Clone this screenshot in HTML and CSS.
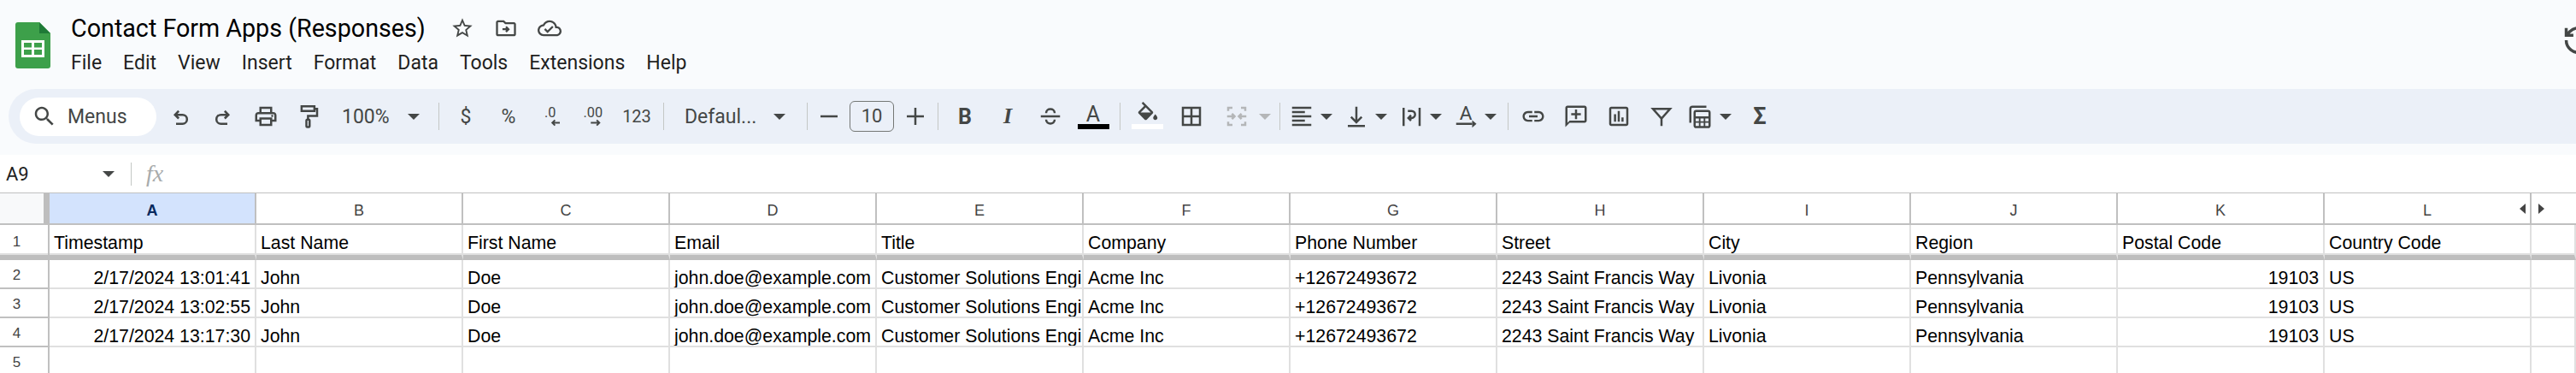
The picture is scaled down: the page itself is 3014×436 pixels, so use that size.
FILE: index.html
```html
<!DOCTYPE html>
<html lang="en">
<head>
  <meta charset="UTF-8">
  <title>Contact Form Apps (Responses)</title>
  <link rel="stylesheet" href="styles.css">
</head>
<body>
  <header class="top">
    <div class="titlebar">
      <svg class="logo" viewBox="0 0 41 54">
        <path d="M3 0h25l13 13v38a3 3 0 0 1-3 3H3a3 3 0 0 1-3-3V3a3 3 0 0 1 3-3z" fill="#3da04a"/>
        <path d="M28 0l13 13H28z" fill="#1f7a37"/>
        <path d="M7 21h27v20H7zm3 3v5.500h9V24zm12 0v5.500h9V24zM10 32v6h9v-6zm12 0v6h9v-6z" fill="#fff" fill-rule="evenodd"/>
      </svg>
      <div class="doc">
        <div class="doc-title">
          <h1>Contact Form Apps (Responses)</h1>
          <div class="doc-icons">
            <svg class="ico-doc" viewBox="0 0 24 24"><path d="M22 9.240l-7.190-.62L12 2 9.190 8.630 2 9.240l5.460 4.730L5.820 21 12 17.270 18.180 21l-1.630-7.030L22 9.240zM12 15.400l-3.760 2.270 1-4.280-3.320-2.880 4.380-.38L12 6.100l1.710 4.040 4.380.38-3.320 2.880 1 4.280L12 15.400z"/></svg>
            <svg class="ico-doc" viewBox="0 0 24 24"><path d="M20 6h-8l-2-2H4c-1.100 0-2 .9-2 2v12c0 1.100.9 2 2 2h16c1.100 0 2-.9 2-2V8c0-1.100-.9-2-2-2zm0 12H4V6h5.170l2 2H20v10z"/><path class="line" d="M8.500 13h6M12 10.500l2.500 2.500-2.500 2.500"/></svg>
            <svg class="ico-doc" viewBox="0 0 24 24"><path d="M19.350 10.040C18.670 6.590 15.640 4 12 4 9.110 4 6.600 5.640 5.350 8.040 2.340 8.360 0 10.910 0 14c0 3.310 2.690 6 6 6h13c2.760 0 5-2.240 5-5 0-2.640-2.050-4.780-4.650-4.960zM19 18H6c-2.210 0-4-1.790-4-4 0-2.050 1.530-3.760 3.560-3.970l1.070-.11.5-.95C8.080 7.140 9.940 6 12 6c2.620 0 4.880 1.860 5.390 4.430l.3 1.500 1.530.11c1.560.1 2.780 1.410 2.780 2.960 0 1.650-1.350 3-3 3zm-9-3.820l-2.090-2.090L6.500 13.500 10 17l6.010-6.010-1.410-1.410z"/></svg>
          </div>
        </div>
        <nav class="menu">
          <span>File</span><span>Edit</span><span>View</span><span>Insert</span><span>Format</span><span>Data</span><span>Tools</span><span>Extensions</span><span>Help</span>
        </nav>
      </div>
      <svg class="history" viewBox="0 0 24 24"><path d="M3.500 12a9 9 0 1 0 2.600-6.300L3.500 8.300M3.500 3v5.300h5.300M12 7v5.500l4 2"/></svg>
    </div>

    <div class="toolbar">
      <div class="search">
        <svg class="ico" viewBox="0 0 24 24"><path d="M15.500 14h-.79l-.28-.27C15.410 12.590 16 11.110 16 9.500 16 5.910 13.090 3 9.500 3S3 5.910 3 9.500 5.910 16 9.500 16c1.610 0 3.090-.59 4.230-1.570l.27.28v.79l5 4.990L20.490 19l-4.990-5zm-6 0C7.010 14 5 11.990 5 9.500S7.010 5 9.500 5 14 7.010 14 9.500 11.990 14 9.500 14z"/></svg>
        <span>Menus</span>
      </div>

      <div class="btn"><svg class="ico" viewBox="0 0 24 24"><path class="line" d="M10.500 7L7 10.500l3.500 3.500M7 10.500h7a4.200 4.200 0 0 1 0 8.500H8"/></svg></div>
      <div class="btn"><svg class="ico" viewBox="0 0 24 24"><path class="line" d="M13.500 7l3.500 3.500-3.500 3.500M17 10.500h-7a4.200 4.200 0 0 0 0 8.500h6"/></svg></div>
      <div class="btn"><svg class="ico" viewBox="0 0 24 24"><path d="M19 8h-1V3H6v5H5c-1.660 0-3 1.340-3 3v6h4v4h12v-4h4v-6c0-1.660-1.340-3-3-3zM8 5h8v3H8V5zm8 14H8v-4h8v4zm4-4h-2v-2H6v2H4v-4c0-.55.45-1 1-1h14c.55 0 1 .45 1 1v4z"/><circle cx="18" cy="11.500" r="1"/></svg></div>
      <div class="btn"><svg class="ico" viewBox="0 0 24 24"><path class="line" d="M5.500 2.500h12v4.500h-12zM17.500 5H20v6.500h-8.500V15"/><rect class="line" x="10" y="15" width="3" height="7" rx="1"/></svg></div>
      <div class="drop zoom-drop"><span>100%</span><i class="caret"></i></div>
      <i class="sep"></i>

      <div class="btn"><span class="glyph">$</span></div>
      <div class="btn"><span class="glyph">%</span></div>
      <div class="btn">
        <svg class="ico" viewBox="0 0 24 24"><text x="11" y="13" text-anchor="middle" class="svg-label">.0</text><path class="line thin" d="M20 18h-7M15.500 15.500L13 18l2.500 2.500"/></svg>
      </div>
      <div class="btn">
        <svg class="ico" viewBox="0 0 24 24"><text x="11" y="13" text-anchor="middle" class="svg-label">.00</text><path class="line thin" d="M9 18h8M14.500 15.500L17 18l-2.500 2.500"/></svg>
      </div>
      <div class="btn"><span class="glyph digits">123</span></div>
      <i class="sep"></i>

      <div class="drop font-drop"><span>Defaul...</span><i class="caret"></i></div>
      <i class="sep"></i>

      <div class="btn minus"><svg class="ico" viewBox="0 0 24 24"><path d="M4 11h16v2H4z"/></svg></div>
      <div class="size-box">10</div>
      <div class="btn plus"><svg class="ico" viewBox="0 0 24 24"><path d="M11 4h2v7h7v2h-7v7h-2v-7H4v-2h7z"/></svg></div>
      <i class="sep"></i>

      <div class="btn"><span class="glyph bold">B</span></div>
      <div class="btn"><span class="glyph italic">I</span></div>
      <div class="btn"><svg class="ico" viewBox="0 0 24 24"><path d="M3 11h18v2H3z"/><path class="line" d="M8 9c0-5 8-5 8 0M8 15c0 5 8 5 8 0"/></svg></div>
      <div class="btn swatch"><span class="glyph">A</span><i class="bar bar-black"></i></div>
      <i class="sep"></i>

      <div class="btn swatch fill-btn">
        <svg class="ico fill-ico" viewBox="0 0 24 24"><path fill-rule="evenodd" d="M16.560 8.940L7.620 0 6.210 1.410l2.380 2.380-5.150 5.150c-.59.59-.59 1.540 0 2.120l5.500 5.500c.29.29.68.44 1.060.44s.77-.15 1.060-.44l5.500-5.500c.59-.58.59-1.530 0-2.120zM5.210 10L10 5.210 14.790 10H5.210zM19 11.500s-2 2.170-2 3.500c0 1.100.9 2 2 2s2-.9 2-2c0-1.330-2-3.500-2-3.500z"/></svg>
        <i class="bar bar-white"></i>
      </div>
      <div class="btn"><svg class="ico" viewBox="0 0 24 24"><path d="M3 3v18h18V3H3zm8 16H5v-6h6v6zm0-8H5V5h6v6zm8 8h-6v-6h6v6zm0-8h-6V5h6v6z"/></svg></div>
      <div class="drop merge-drop">
        <svg class="ico off" viewBox="0 0 24 24"><path class="line" d="M8 4H4v3M16 4h4v3M8 20H4v-3M16 20h4v-3M3 12h7M7.500 9.500L10 12l-2.500 2.500M21 12h-7M16.500 9.500L14 12l2.500 2.500"/></svg>
        <i class="caret off-caret"></i>
      </div>
      <i class="sep"></i>

      <div class="drop tool-drop"><svg class="ico" viewBox="0 0 24 24"><path d="M15 15H3v2h12v-2zm0-8H3v2h12V7zM3 13h18v-2H3v2zm0 8h18v-2H3v2zM3 3v2h18V3H3z"/></svg><i class="caret"></i></div>
      <div class="drop tool-drop"><svg class="ico" viewBox="0 0 24 24"><path class="line" d="M12 3v14M7 12.500l5 5 5-5"/><path d="M4 20h16v2H4z"/></svg><i class="caret"></i></div>
      <div class="drop tool-drop"><svg class="ico" viewBox="0 0 24 24"><path d="M4 4h2v17H4zM19 4h2v17h-2z"/><path class="line" d="M9 7h3.500a3 3 0 0 1 0 6.500H10M12 11l-2.500 2.500L12 16"/></svg><i class="caret"></i></div>
      <div class="drop tool-drop"><svg class="ico" viewBox="0 0 24 24"><text x="12" y="15" text-anchor="middle" class="svg-label big">A</text><path d="M3 18h15v2H3z"/><path d="M18 15.500l4 3.500-4 3.500z"/></svg><i class="caret"></i></div>
      <i class="sep sep-tight"></i>

      <div class="btn"><svg class="ico" viewBox="0 0 24 24"><path d="M3.900 12c0-1.710 1.390-3.100 3.100-3.100h4V7H7c-2.760 0-5 2.240-5 5s2.240 5 5 5h4v-1.900H7c-1.710 0-3.100-1.390-3.100-3.100zM8 13h8v-2H8v2zm9-6h-4v1.900h4c1.710 0 3.100 1.390 3.100 3.100s-1.390 3.100-3.100 3.100h-4V17h4c2.760 0 5-2.240 5-5s-2.240-5-5-5z"/></svg></div>
      <div class="btn"><svg class="ico" viewBox="0 0 24 24"><path d="M20 2H4c-1.100 0-2 .9-2 2v18l4-4h14c1.100 0 2-.9 2-2V4c0-1.100-.9-2-2-2zm0 14H6l-2 2V4h16v12z"/><path d="M11 5.500h2V9h3.500v2H13v3.500h-2V11H7.500V9H11z"/></svg></div>
      <div class="btn"><svg class="ico" viewBox="0 0 24 24"><path d="M19 3H5c-1.100 0-2 .9-2 2v14c0 1.100.9 2 2 2h14c1.100 0 2-.9 2-2V5c0-1.100-.9-2-2-2zm0 16H5V5h14v14z"/><path d="M7.500 10h2v7h-2zM11 7h2v10h-2zM14.500 13h2v4h-2z"/></svg></div>
      <div class="btn"><svg class="ico" viewBox="0 0 24 24"><path class="line" d="M4 5h16l-8 9zM12 14v7"/></svg></div>
      <div class="drop calc-drop"><svg class="ico" viewBox="0 0 24 24"><path class="line" d="M18 3H5a2 2 0 0 0-2 2v13"/><rect class="line" x="7" y="7" width="14" height="15" rx="1.500"/><path d="M7 12h14v2H7zM7 16.500h14v1.500H7zM11 13h1.500v9H11zM15.500 13H17v9h-1.500z"/></svg><i class="caret"></i></div>
      <div class="btn"><span class="glyph bold sigma">Σ</span></div>
    </div>
  </header>

  <div class="formula-bar">
    <div class="name-box"><span>A9</span><i class="caret"></i></div>
    <i class="sep formula-sep"></i>
    <span class="fx">fx</span>
  </div>

  <table class="sheet">
    <colgroup>
      <col class="col-rowhead">
      <col class="col-data"><col class="col-data"><col class="col-data"><col class="col-data">
      <col class="col-data"><col class="col-data"><col class="col-data"><col class="col-data">
      <col class="col-data"><col class="col-data"><col class="col-data"><col class="col-data">
      <col>
    </colgroup>
    <thead>
      <tr>
        <th class="corner"></th>
        <th class="picked">A</th><th>B</th><th>C</th><th>D</th><th>E</th><th>F</th>
        <th>G</th><th>H</th><th>I</th><th>J</th><th>K</th>
        <th class="last-col">L<i class="tri tri-left"></i></th>
        <th class="tail"><i class="tri tri-right"></i></th>
      </tr>
    </thead>
    <tbody>
      <tr class="frozen">
        <th>1</th>
        <td>Timestamp</td><td>Last Name</td><td>First Name</td><td>Email</td><td>Title</td><td>Company</td>
        <td>Phone Number</td><td>Street</td><td>City</td><td>Region</td><td>Postal Code</td><td>Country Code</td><td></td>
      </tr>
      <tr>
        <th>2</th>
        <td class="num">2/17/2024 13:01:41</td><td>John</td><td>Doe</td><td>john.doe@example.com</td><td>Customer Solutions Engineer</td><td>Acme Inc</td>
        <td>+12672493672</td><td>2243 Saint Francis Way</td><td>Livonia</td><td>Pennsylvania</td><td class="num">19103</td><td>US</td><td></td>
      </tr>
      <tr>
        <th>3</th>
        <td class="num">2/17/2024 13:02:55</td><td>John</td><td>Doe</td><td>john.doe@example.com</td><td>Customer Solutions Engineer</td><td>Acme Inc</td>
        <td>+12672493672</td><td>2243 Saint Francis Way</td><td>Livonia</td><td>Pennsylvania</td><td class="num">19103</td><td>US</td><td></td>
      </tr>
      <tr>
        <th>4</th>
        <td class="num">2/17/2024 13:17:30</td><td>John</td><td>Doe</td><td>john.doe@example.com</td><td>Customer Solutions Engineer</td><td>Acme Inc</td>
        <td>+12672493672</td><td>2243 Saint Francis Way</td><td>Livonia</td><td>Pennsylvania</td><td class="num">19103</td><td>US</td><td></td>
      </tr>
      <tr>
        <th>5</th>
        <td></td><td></td><td></td><td></td><td></td><td></td><td></td><td></td><td></td><td></td><td></td><td></td><td></td>
      </tr>
    </tbody>
  </table>
</body>
</html>
```

FILE: styles.css
```css
html, body {
  margin: 0;
  height: 436px;
  overflow: hidden;
  background: #fff;
  font-family: Roboto, "Liberation Sans", sans-serif;
  color: #444746;
}

svg {
  display: block;
  flex-shrink: 0;
  fill: #444746;
}

.line {
  fill: none;
  stroke: #444746;
  stroke-width: 2;
}

.thin {
  stroke-width: 1.600;
}

/* top area */
.top {
  height: 181px;
  background: #f9fbfd;
  overflow: hidden;
}

.titlebar {
  display: flex;
  height: 104px;
  box-sizing: border-box;
  padding: 14px 0 0 18px;
}

.logo {
  width: 41px;
  height: 54px;
  margin-top: 12px;
}

.doc {
  margin-left: 24px;
}

.doc-title {
  display: flex;
  align-items: center;
  height: 38px;
}

.doc-title h1 {
  margin: 0;
  width: 414px;
  font-size: 28.700px;
  font-weight: 400;
  color: #000;
  white-space: nowrap;
}

.doc-icons {
  display: flex;
  gap: 23px;
  margin-left: 30px;
}

.ico-doc {
  width: 28px;
  height: 28px;
}

.menu {
  display: flex;
  margin-top: 8px;
  font-size: 23px;
  line-height: 28px;
  color: #1f1f1f;
}

.menu span {
  margin-right: 25px;
}

.history {
  width: 38px;
  height: 38px;
  margin: 14px -21px 0 auto;
  fill: none;
  stroke: #444746;
  stroke-width: 2.200;
}

/* toolbar */
.toolbar {
  display: flex;
  align-items: center;
  height: 64px;
  margin-left: 10px;
  padding-left: 13px;
  background: #ebf0f8;
  border-radius: 32px 0 0 32px;
  font-size: 23px;
}

.search {
  display: flex;
  align-items: center;
  gap: 12px;
  width: 160px;
  height: 45px;
  box-sizing: border-box;
  padding-left: 14px;
  margin-right: 3px;
  background: #fff;
  border-radius: 23px;
}

.ico {
  width: 30px;
  height: 30px;
}

.btn {
  position: relative;
  display: flex;
  align-items: center;
  justify-content: center;
  width: 50px;
  height: 50px;
}

.minus {
  width: 38px;
}

.plus {
  width: 40px;
  margin-left: 5px;
}

.fill-btn {
  width: 52px;
}

.glyph {
  font-size: 23px;
  line-height: 1;
}

.glyph.digits {
  font-size: 20px;
}

.bold {
  font-weight: 700;
  font-size: 25px;
}

.sigma {
  font-size: 27px;
}

.italic {
  font-style: italic;
  font-weight: 700;
  font-size: 26px;
  font-family: "Liberation Serif", serif;
}

.svg-label {
  font-size: 13px;
  font-family: Roboto, sans-serif;
  fill: #444746;
}

.svg-label.big {
  font-size: 18px;
}

.drop {
  display: flex;
  align-items: center;
  height: 50px;
  box-sizing: border-box;
}

.zoom-drop {
  width: 121px;
  padding-left: 14px;
  gap: 21px;
}

.font-drop {
  width: 155px;
  padding-left: 18px;
  gap: 20px;
}

.merge-drop {
  width: 72px;
  padding-left: 13px;
  gap: 11px;
}

.tool-drop {
  width: 64px;
  padding-left: 4px;
  gap: 7px;
}

.calc-drop {
  width: 65px;
  padding-left: 5px;
  gap: 8px;
}

.caret {
  width: 0;
  height: 0;
  border-left: 7px solid transparent;
  border-right: 7px solid transparent;
  border-top: 7px solid #444746;
}

.off-caret {
  border-top-color: #b4b6b8;
}

.off path {
  stroke: #b4b6b8;
}

.sep {
  width: 1px;
  height: 32px;
  margin: 0 6px;
  background: #c4c7c5;
}

.sep-tight {
  margin: 0 4px;
}

.size-box {
  width: 52px;
  height: 36px;
  margin-left: 5px;
  box-sizing: border-box;
  border: 1.500px solid #747775;
  border-radius: 6px;
  text-align: center;
  font-size: 22px;
  line-height: 33px;
}

.swatch .glyph {
  margin-bottom: 6px;
  font-size: 25px;
}

.fill-ico {
  margin-bottom: 4px;
}

.bar {
  position: absolute;
  left: 7px;
  bottom: 10px;
  width: 37px;
  height: 6px;
}

.bar-black {
  background: #000;
}

.bar-white {
  background: #fff;
}

/* formula bar */
.formula-bar {
  display: flex;
  align-items: center;
  height: 44px;
  background: #fff;
}

.name-box {
  display: flex;
  align-items: center;
  justify-content: space-between;
  width: 134px;
  box-sizing: border-box;
  padding: 0 0 0 7px;
  font-size: 22px;
  color: #1f1f1f;
}

.formula-sep {
  height: 27px;
  margin: 0 0 0 19px;
}

.fx {
  margin-left: 17px;
  font: italic 28px "Liberation Serif", serif;
  color: #a8abac;
}

/* grid */
.sheet {
  table-layout: fixed;
  width: 3014px;
  border-collapse: separate;
  border-spacing: 0;
  border-top: 1px solid #c0c0c0;
  font-family: "Liberation Sans", Arial, sans-serif;
}

.col-rowhead {
  width: 58px;
}

.col-data {
  width: 242px;
}

.sheet th,
.sheet td {
  box-sizing: border-box;
  padding: 0;
  overflow: hidden;
  white-space: nowrap;
}

.sheet thead th {
  position: relative;
  height: 37px;
  padding-top: 6px;
  border-right: 2px solid #c0c0c0;
  border-bottom: 2px solid #c0c0c0;
  font-size: 18px;
  font-weight: 400;
  color: #444;
  text-align: center;
}

.sheet thead .corner {
  background: #f8f9fa;
  border-right: 7px solid #bebebe;
}

.sheet thead .picked {
  background: #d3e3fd;
  color: #0b2a5e;
  font-weight: 700;
}

.sheet thead .tail {
  border-right: 0;
}

.tri {
  position: absolute;
  top: 12px;
  width: 0;
  height: 0;
  border-top: 6px solid transparent;
  border-bottom: 6px solid transparent;
}

.tri-left {
  right: 5px;
  border-right: 7px solid #444;
}

.tri-right {
  left: 8px;
  border-left: 7px solid #444;
}

.sheet tbody th {
  height: 34px;
  padding: 4px 17px 0 0;
  border-right: 2px solid #c0c0c0;
  border-bottom: 2px solid #c0c0c0;
  font-size: 17px;
  font-weight: 400;
  color: #444;
  text-align: center;
}

.sheet td {
  height: 34px;
  padding: 10px 5px 0;
  border-right: 2px solid #e0e0e0;
  border-bottom: 2px solid #e0e0e0;
  font-size: 21.300px;
  line-height: 22px;
  color: #000;
}

.sheet td.num {
  text-align: right;
}

.sheet .frozen th,
.sheet .frozen td {
  height: 41px;
  padding-top: 7px;
  border-bottom: 6px solid #bebebe;
  box-shadow: inset 0 -2px #e0e0e0;
}

.sheet .frozen th {
  padding-top: 5px;
}
```
